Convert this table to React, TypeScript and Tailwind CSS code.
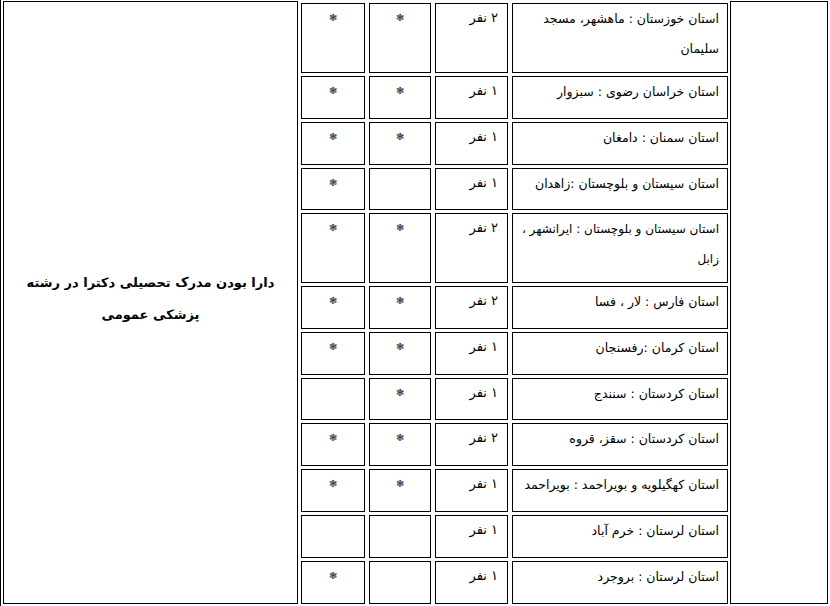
const rows: { place: string[]; count: string; a: boolean; b: boolean; tight?: boolean }[] = [
  { place: ["استان خوزستان : ماهشهر، مسجد", "سلیمان"], count: "۲ نفر", a: true, b: true },
  { place: ["استان خراسان رضوی : سبزوار"], count: "۱ نفر", a: true, b: true },
  { place: ["استان سمنان : دامغان"], count: "۱ نفر", a: true, b: true },
  { place: ["استان سیستان و بلوچستان  :زاهدان"], count: "۱ نفر", a: true, b: false },
  { place: ["استان سیستان و بلوچستان : ایرانشهر ،", "زابل"], count: "۲ نفر", a: true, b: true, tight: true },
  { place: ["استان فارس : لار ، فسا"], count: "۲ نفر", a: true, b: true },
  { place: ["استان کرمان :رفسنجان"], count: "۱ نفر", a: true, b: true },
  { place: ["استان کردستان : سنندج"], count: "۱ نفر", a: false, b: true },
  { place: ["استان کردستان :  سقز، قروه"], count: "۲ نفر", a: true, b: true },
  { place: ["استان کهگیلویه و بویراحمد : بویراحمد"], count: "۱ نفر", a: true, b: true },
  { place: ["استان لرستان : خرم آباد"], count: "۱ نفر", a: false, b: false },
  { place: ["استان لرستان :  بروجرد"], count: "۱ نفر", a: true, b: false },
]

// row heights tuned so the last row ends on the outer bottom line
const heights = ["h-[70px]", "h-[43px]", "h-[43px]", "h-[42px]", "h-[70px]", "h-[43px]", "h-[43px]", "h-[42px]", "h-[43px]", "h-[43px]", "h-[43px]", "h-[43px]"]

function Star({ show }: { show: boolean }) {
  return (
    <div className="border border-black flex justify-center pt-[9px] text-[10px] leading-none text-[#343a4a]">
      {show ? "❃" : ""}
    </div>
  )
}

export default function App() {
  return (
    <div
      className="w-[830px] h-[606px] bg-white flex overflow-hidden text-black"
      style={{ fontFamily: '"DejaVu Sans", "Noto Sans", sans-serif' }}
    >
      <div className="w-px h-full bg-black" />
      <div className="w-[2px]" />

      {/* left cell */}
      <div className="mt-[1px] w-[295px] h-[603px] border border-black flex items-center justify-center">
        <p dir="rtl" className="text-center font-bold text-[13px] leading-[32px] mt-[-8px]">
          دارا بودن مدرک تحصیلی دکترا در رشته
          <br />
          پزشکی عمومی
        </p>
      </div>

      <div className="w-[3px]" />

      {/* nested table */}
      <div className="w-[427px] pt-[3px] flex flex-col gap-y-[3px]">
        {rows.map((r, i) => (
          <div key={i} className={`grid grid-cols-[64px_62px_73px_1fr] gap-x-[4px] ${heights[i]}`}>
            <Star show={r.a} />
            <Star show={r.b} />
            <div dir="rtl" className="border border-black pr-[9px] text-[13px] leading-[28px]">
              {r.count}
            </div>
            <div
              dir="rtl"
              className={`border border-black pr-[8px] leading-[30px] whitespace-nowrap overflow-hidden ${r.tight ? "text-[12px]" : "text-[12.5px]"}`}
            >
              {r.place.map((l, j) => (
                <div key={j}>{l}</div>
              ))}
            </div>
          </div>
        ))}
      </div>

      <div className="w-[2px]" />

      {/* right cell */}
      <div className="mt-[1px] w-[98px] h-[603px] border border-black" />
    </div>
  )
}
